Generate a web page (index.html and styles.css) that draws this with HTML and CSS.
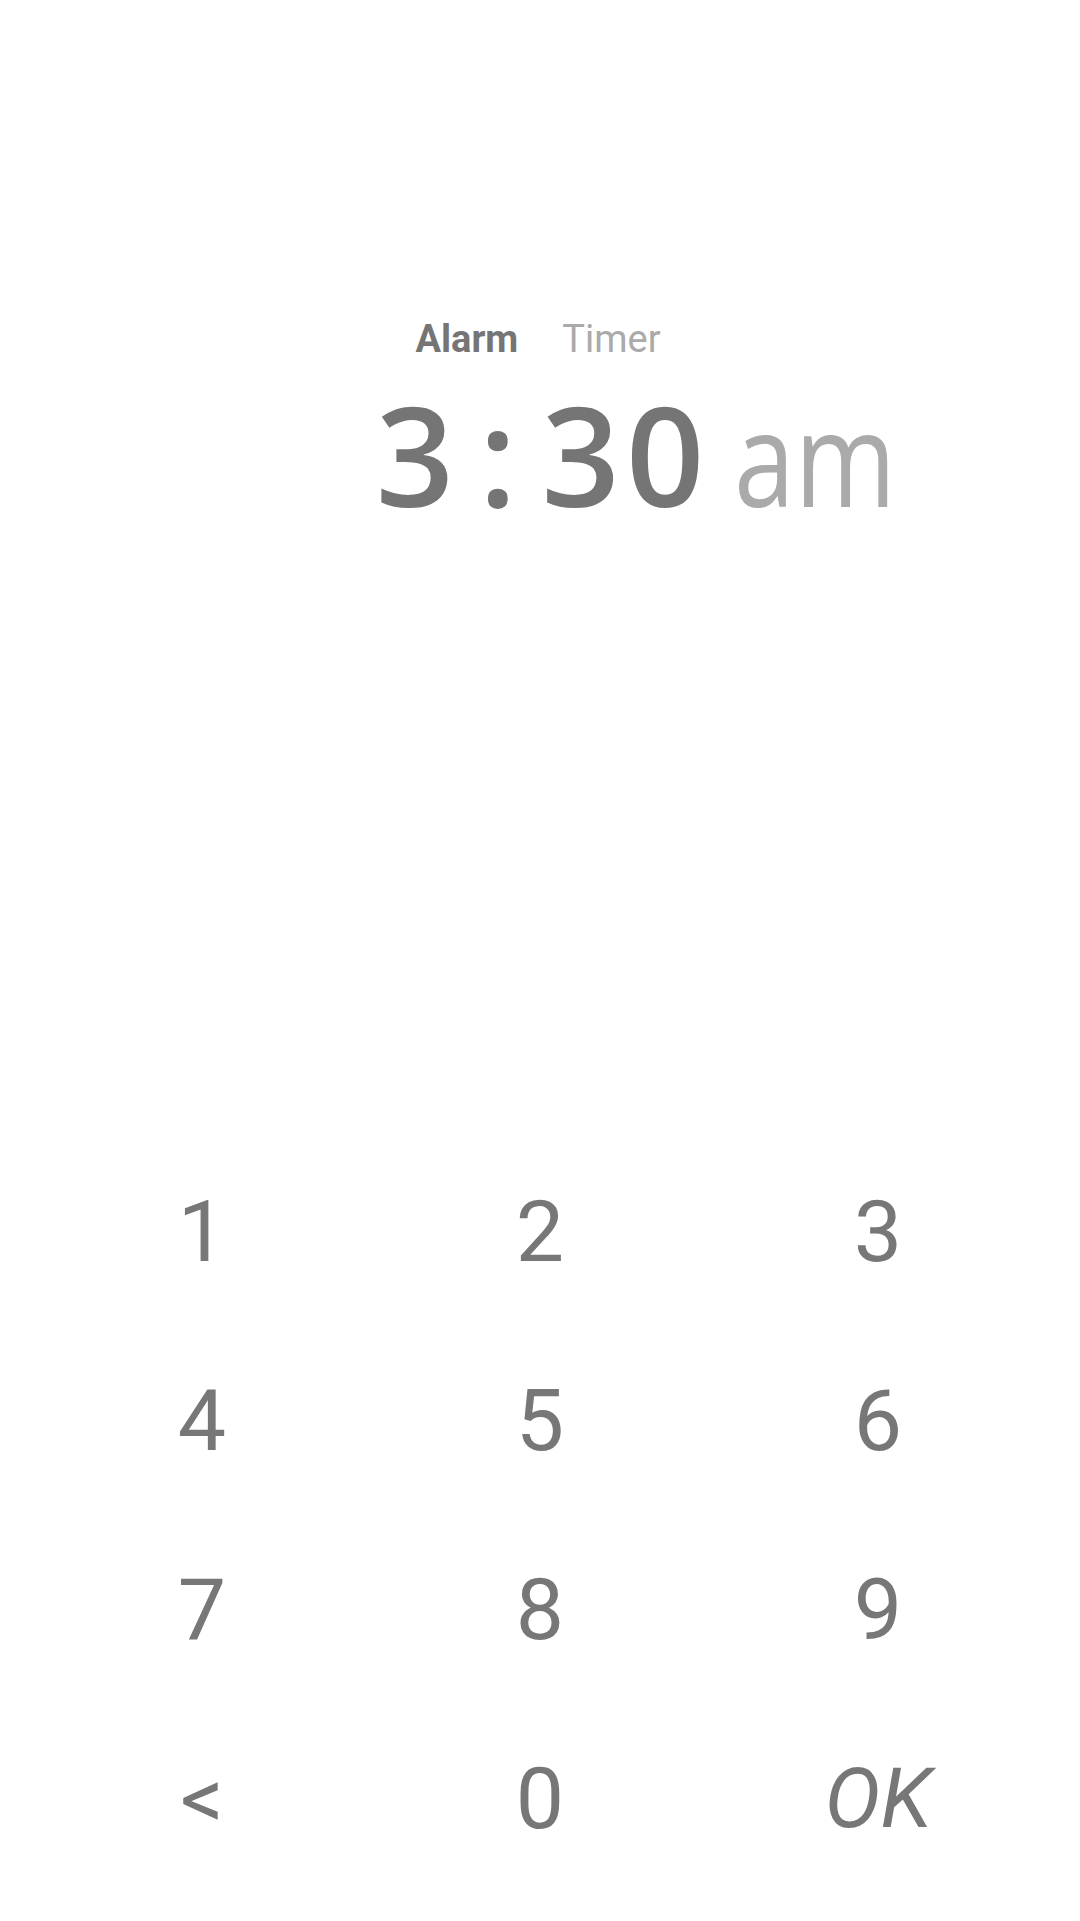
FILE: index.html
```html
<!DOCTYPE html>
<html lang="en">
<head>
<meta charset="utf-8">
<title>Alarm</title>
<link rel="stylesheet" href="styles.css">
</head>
<body>
<div class="screen">
  <header class="header">
    <nav class="tabs">
      <span class="tab tab-active">Alarm</span>
      <span class="tab">Timer</span>
    </nav>
    <div class="time-row">
      <div class="time-side"></div>
      <div class="time">
        <span class="hour">3</span><span class="colon">:</span><span class="minutes">30</span>
      </div>
      <div class="time-side">
        <span class="meridiem">am</span>
      </div>
    </div>
  </header>
  <main class="keypad">
    <button class="key">1</button>
    <button class="key">2</button>
    <button class="key">3</button>
    <button class="key">4</button>
    <button class="key">5</button>
    <button class="key">6</button>
    <button class="key">7</button>
    <button class="key">8</button>
    <button class="key">9</button>
    <button class="key">&lt;</button>
    <button class="key">0</button>
    <button class="key key-ok">OK</button>
  </main>
</div>
</body>
</html>
```
FILE: styles.css
```css
html, body {
  margin: 0;
  padding: 0;
  background: #ffffff;
}

.screen {
  width: 1080px;
  height: 1921px;
  display: flex;
  flex-direction: column;
  background: #ffffff;
  overflow: hidden;
}

.header {
  padding-top: 316px;
}

.tabs {
  display: flex;
  justify-content: center;
  gap: 44px;
  font-family: Roboto, "Liberation Sans", sans-serif;
  font-size: 38px;
  line-height: 46px;
  color: #aaaaaa;
  padding-right: 4px;
}

.tab-active {
  font-weight: 700;
  color: #757575;
}

.time-row {
  margin-top: 12px;
  display: grid;
  grid-template-columns: 1fr auto 1fr;
  align-items: baseline;
  font-family: "Open Sans", "Noto Sans", sans-serif;
  font-size: 137px;
  line-height: 160px;
}

.time {
  display: flex;
  align-items: baseline;
  color: #757575;
  font-weight: 600;
}

.hour {
  margin-right: 25px;
}

.colon {
  margin-right: 25px;
}

.minutes {
  letter-spacing: 6px;
  margin-right: -6px;
}

.meridiem {
  display: inline-block;
  margin-left: 30px;
  color: #aaaaaa;
  font-weight: 400;
  font-size: 131px;
  transform: scaleX(0.835);
  transform-origin: left bottom;
}

.keypad {
  margin-top: auto;
  padding: 0 33px 28px;
  display: grid;
  grid-template-columns: repeat(3, 338px);
  grid-auto-rows: 189px;
}

.key {
  border: 0;
  background: transparent;
  padding: 0;
  margin: 0;
  font-family: Roboto, "Liberation Sans", sans-serif;
  font-size: 86px;
  line-height: 189px;
  font-weight: 400;
  color: #777777;
  text-align: center;
  display: block;
}

.key-ok {
  font-style: italic;
  font-size: 84px;
}
```
